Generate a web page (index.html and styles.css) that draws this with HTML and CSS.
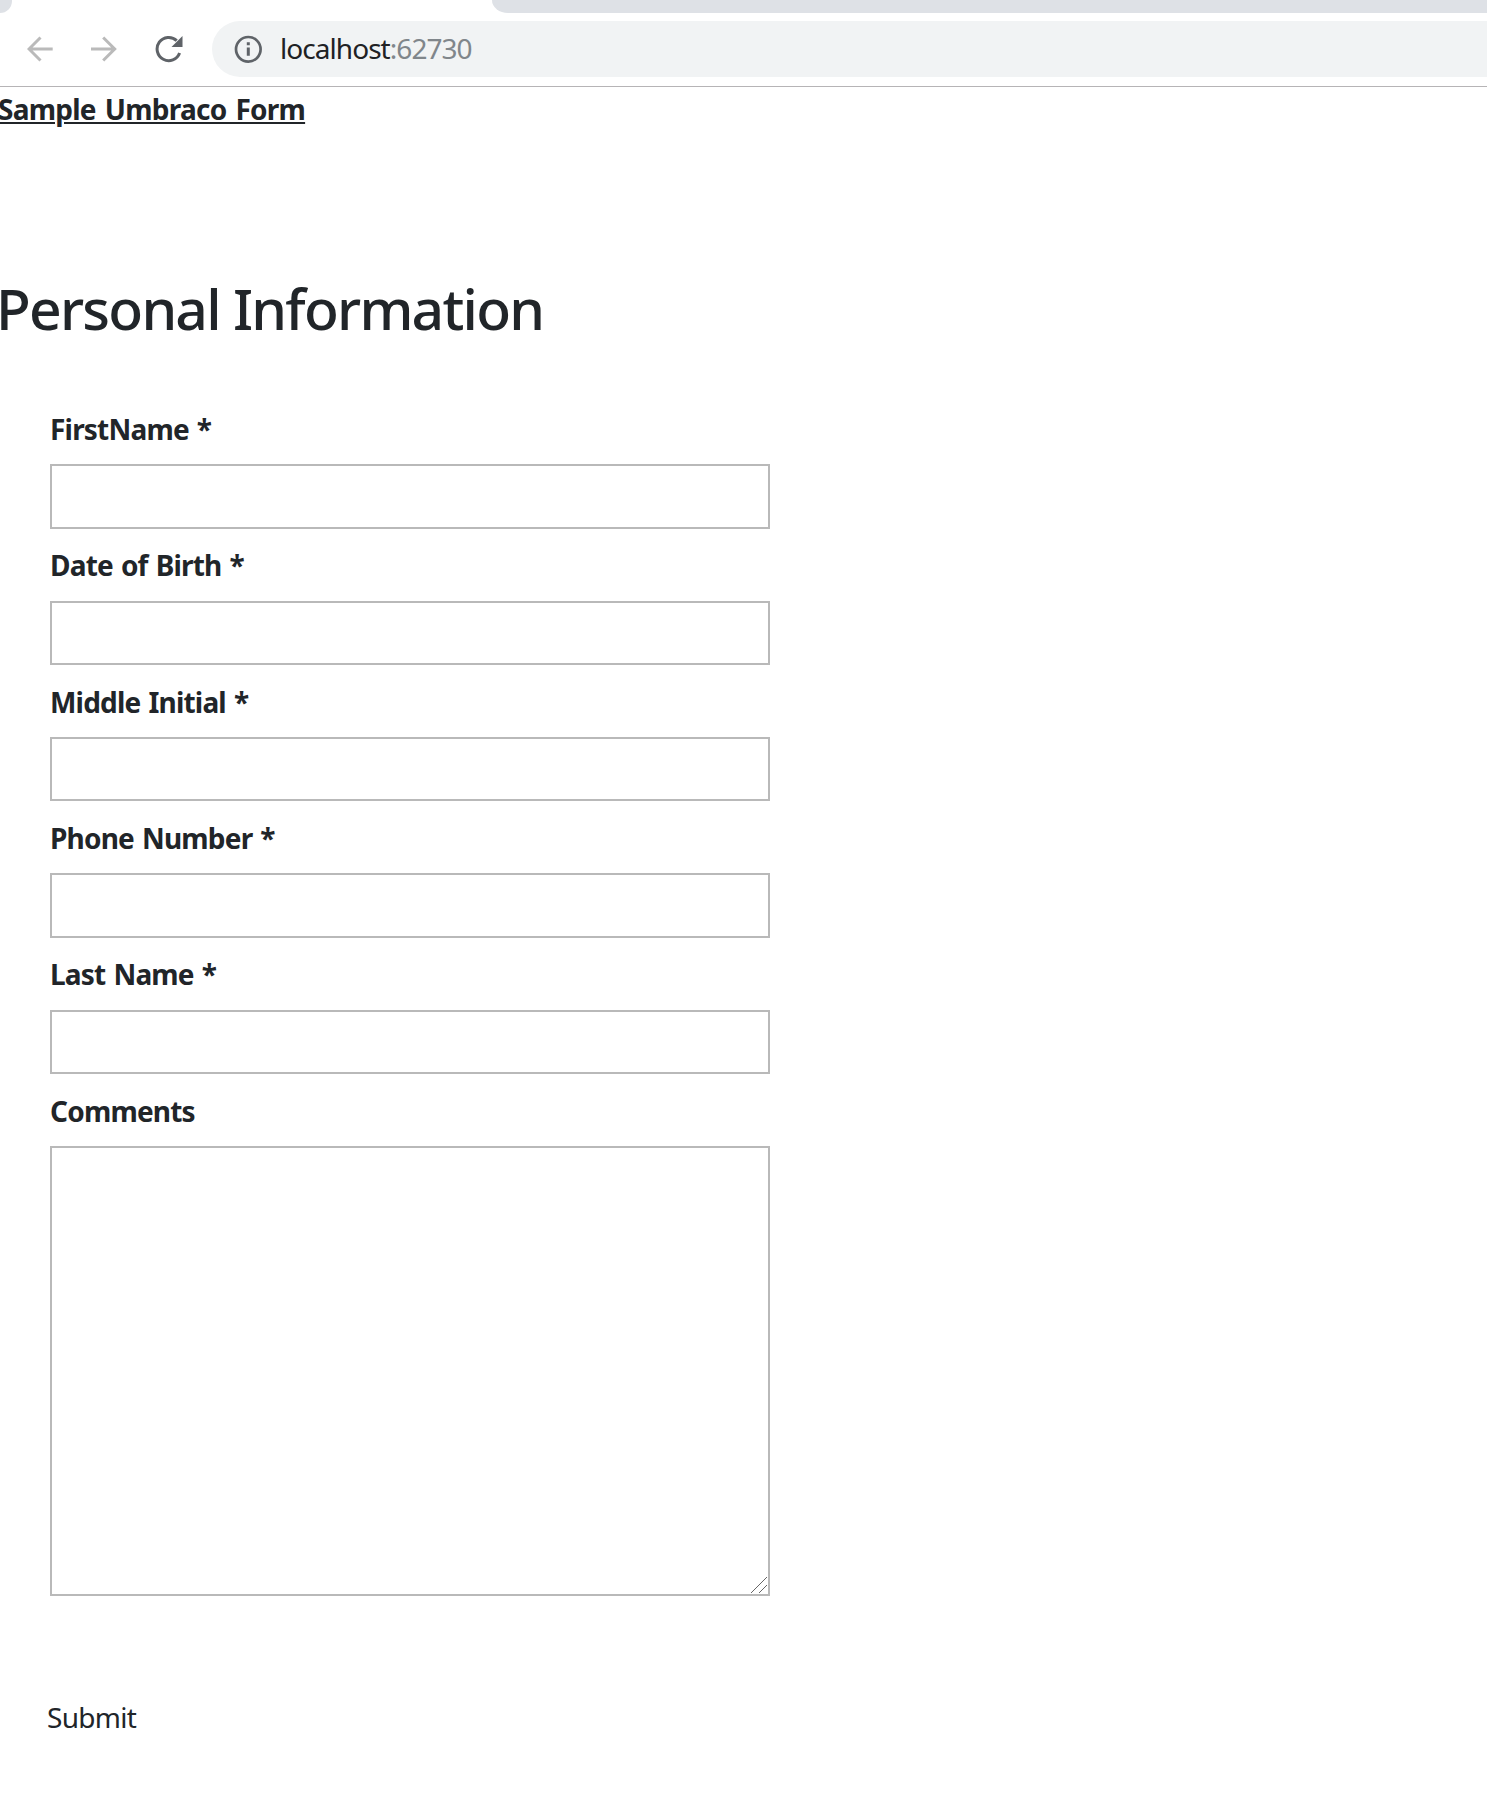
FILE: index.html
```html
<!DOCTYPE html>
<html lang="en">
<head>
    <meta charset="UTF-8">
    <meta name="viewport" content="width=device-width, initial-scale=1.0">
    <title>Sample Umbraco Form</title>
    <link rel="stylesheet" href="styles.css">
</head>
<body>
    <!-- Browser bar -->
    <header class="browser">
        <div class="tab-strip">
            <div class="tab-left"></div>
            <div class="tab-right"></div>
        </div>
        <div class="toolbar">
            <svg class="nav-icon back" width="26" height="26" viewBox="0 0 26 26">
                <path d="M25.7 13H2M13.5 1.5L2 13l11.5 11.5"/>
            </svg>
            <svg class="nav-icon forward" width="26" height="26" viewBox="0 0 26 26">
                <path d="M0 13H23.7M12.2 1.5L23.7 13 12.2 24.5"/>
            </svg>
            <svg class="reload" width="28" height="28" viewBox="0 0 28 28">
                <path class="reload-arc" d="M21.7 5.6A11.6 11.6 0 1 0 24.6 18"/>
                <path class="reload-head" d="M27.5 1v11H16.5z"/>
            </svg>
            <div class="address">
                <svg class="info" width="28" height="28" viewBox="0 0 28 28">
                    <circle cx="14.3" cy="14.3" r="12.3"/>
                    <path d="M12.8 7.3h3v3h-3zM12.8 12.6h3v8.2h-3z"/>
                </svg>
                <span class="host">localhost</span><span class="port">:62730</span>
            </div>
        </div>
    </header>

    <main class="page">
        <a class="form-link">Sample Umbraco Form</a>
        <h1>Personal Information</h1>

        <form>
            <div class="field">
                <label for="firstName">FirstName *</label>
                <input type="text" id="firstName">
            </div>
            <div class="field">
                <label for="dob">Date of Birth *</label>
                <input type="text" id="dob">
            </div>
            <div class="field">
                <label for="middleInitial">Middle Initial *</label>
                <input type="text" id="middleInitial">
            </div>
            <div class="field">
                <label for="phone">Phone Number *</label>
                <input type="text" id="phone">
            </div>
            <div class="field">
                <label for="lastName">Last Name *</label>
                <input type="text" id="lastName">
            </div>
            <div class="field comments">
                <label for="comments">Comments</label>
                <textarea id="comments"></textarea>
                <svg class="grip" width="16" height="16" viewBox="0 0 16 16">
                    <path d="M0 16L16 0M8 16l8-8"/>
                </svg>
            </div>
            <button type="submit" class="submit">Submit</button>
        </form>
    </main>
</body>
</html>
```
FILE: styles.css
```css
:root {
    --text-color: #212529;
    --icon-color: #5f6368;
    --border-color: #b9b9b9;
}

* {
    margin: 0;
    padding: 0;
    box-sizing: border-box;
}

body {
    background: #fff;
    color: var(--text-color);
    font-family: 'Noto Sans', 'Open Sans', sans-serif;
    font-size: 28px;
    overflow-x: hidden;
}

svg {
    display: block;
    flex: none;
    fill: none;
}

/* Browser bar */
.browser {
    height: 87px;
    border-bottom: 1px solid #b6b4b6;
}

.tab-strip {
    display: flex;
    justify-content: space-between;
    height: 13px;
}

.tab-left {
    width: 12px;
    background: #dee1e6;
    border-bottom-right-radius: 13px;
}

.tab-right {
    width: 995px;
    background: #dee1e6;
    border-bottom-left-radius: 16px 13px;
}

.toolbar {
    display: flex;
    align-items: center;
    height: 56px;
    margin-top: 8px;
    padding-left: 27px;
}

.nav-icon {
    stroke: #bababa;
    stroke-width: 3;
}

.forward {
    margin-left: 38px;
}

.reload {
    margin-left: 38px;
}

.reload-arc {
    stroke: var(--icon-color);
    stroke-width: 3;
}

.reload-head {
    fill: var(--icon-color);
}

.address {
    display: flex;
    align-items: center;
    flex: 1;
    height: 56px;
    margin-left: 29px;
    padding-left: 22px;
    background: #f1f3f4;
    border-radius: 28px 0 0 28px;
    letter-spacing: -0.95px;
}

.info {
    margin-right: 18px;
}

.info circle {
    stroke: var(--icon-color);
    stroke-width: 2.7;
}

.info path {
    fill: var(--icon-color);
}

.host,
.port {
    padding-bottom: 2px;
}

.host {
    color: #202124;
}

.port {
    color: #80868b;
}

/* Page */
.form-link {
    display: block;
    margin-left: -2px;
    line-height: 44px;
    font-weight: 700;
    letter-spacing: -0.75px;
    word-spacing: 2.5px;
    text-decoration: underline;
    text-decoration-thickness: 2px;
    text-underline-offset: 2px;
}

h1 {
    margin: 142px 0 0 -4px;
    font-size: 57px;
    font-weight: 500;
    line-height: 70px;
    letter-spacing: -1.75px;
}

form {
    width: 720px;
    margin: 61.85px 0 0 50px;
}

.field {
    height: 136.4px;
}

label {
    display: block;
    height: 59.3px;
    line-height: 48px;
    font-weight: 700;
    letter-spacing: -0.8px;
    word-spacing: 1.5px;
}

input,
textarea {
    display: block;
    width: 100%;
    height: 64.4px;
    border: 2px solid var(--border-color);
    border-radius: 0;
    background: #fff;
    font: inherit;
    outline: none;
}

.comments {
    position: relative;
    height: 509.3px;
}

textarea {
    height: 450px;
    resize: none;
}

.grip {
    position: absolute;
    right: 3px;
    bottom: 3px;
    stroke: #666;
    stroke-width: 1;
}

.submit {
    display: block;
    margin: 96px 0 0 -3px;
    border: none;
    background: none;
    color: var(--text-color);
    font: inherit;
    line-height: 50px;
    letter-spacing: -0.7px;
}
```
